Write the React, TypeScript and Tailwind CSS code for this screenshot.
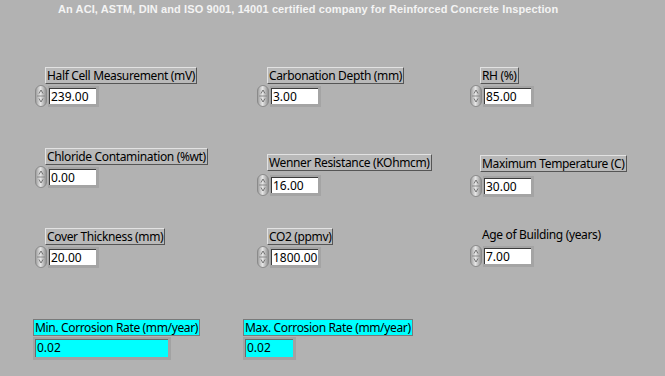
const font = { fontFamily: '"Noto Sans", "DejaVu Sans", sans-serif' };

const Spinner = () => (
  <svg width="12" height="22" viewBox="0 0 12 22" className="shrink-0">
    <defs>
      <linearGradient id="spin" x1="0" y1="0" x2="1" y2="0">
        <stop offset="0" stopColor="#9a9a9a" />
        <stop offset="0.45" stopColor="#e6e6e6" />
        <stop offset="1" stopColor="#8c8c8c" />
      </linearGradient>
    </defs>
    <rect x="0.5" y="0.5" width="11" height="21" rx="5.5" fill="url(#spin)" stroke="#8a8a8a" />
    <line x1="2" y1="11" x2="10" y2="11" stroke="#8a8a8a" />
    <path d="M4 8.5 L6 5 L8 8.5" fill="none" stroke="#6a6a6a" strokeWidth="0.9" />
    <path d="M4 13.5 L6 17 L8 13.5" fill="none" stroke="#6a6a6a" strokeWidth="0.9" />
  </svg>
);

const Label = ({ text, framed = true }: { text: string; framed?: boolean }) => (
  <div
    className={
      framed
        ? "h-[17px] w-fit px-[1px] bg-[#b9b9b9] border border-t-[#e2e2e2] border-l-[#e2e2e2] border-b-[#555555] border-r-[#555555] text-[12px] leading-[15px] tracking-[-0.35px] text-black whitespace-nowrap"
        : "h-[17px] w-fit px-[2px] text-[12px] leading-[15px] tracking-[-0.35px] text-black whitespace-nowrap"
    }
    style={font}
  >
    {text}
  </div>
);

const Numeric = ({ label, value, framed = true, gap = 1 }: { label: string; value: string; framed?: boolean; gap?: number }) => (
  <div className="flex flex-col">
    <div className="ml-[10px]">
      <Label text={label} framed={framed} />
    </div>
    <div className={gap === 1 ? "flex items-center gap-[1px] mt-[1px]" : "flex items-center gap-[1px] mt-[3px]"}>
      <Spinner />
      <div className="h-[21px] w-[51px] bg-[#a4a4a4] pt-[2px] pl-[1px] pr-[3px] pb-[3px]">
        <div
          className="h-full bg-white border-l border-t border-[#3c3c3c] pl-[1px] text-[12px] leading-[15px] text-black"
          style={font}
        >
          {value}
        </div>
      </div>
    </div>
  </div>
);

const Indicator = ({ label, value, width }: { label: string; value: string; width: string }) => (
  <div className="flex flex-col">
    <div
      className="h-[17px] w-fit px-[1px] bg-[#00ffff] border border-[#7a7a7a] text-[12px] leading-[15px] tracking-[-0.35px] text-black whitespace-nowrap"
      style={font}
    >
      {label}
    </div>
    <div className={`${width} h-[23px] mt-[1px] bg-[#a2a2a2] pt-[2px] pl-[2px] pr-[3px] pb-[3px]`}>
      <div
        className="h-full bg-[#00ffff] border-l border-t border-[#6a6a6a] pl-[1px] text-[12px] leading-[16px] text-black"
        style={font}
      >
        {value}
      </div>
    </div>
  </div>
);

export default function App() {
  return (
    <div className="w-[665px] h-[376px] bg-[#b2b2b2] overflow-hidden">
      <div
        className="pl-[58px] pt-[2px] text-[11px] leading-[14px] font-bold tracking-[0.1px] text-[#f4f4f4] whitespace-nowrap"
        style={{ fontFamily: '"Liberation Sans", Arial, sans-serif' }}
      >
        An ACI, ASTM, DIN and ISO 9001, 14001 certified company for Reinforced Concrete Inspection
      </div>

      <div className="flex pl-[35px] mt-[51px]">
        <div className="w-[222px]">
          <Numeric label="Half Cell Measurement (mV)" value="239.00" />
        </div>
        <div className="w-[213px]">
          <Numeric label="Carbonation Depth (mm)" value="3.00" />
        </div>
        <Numeric label="RH (%)" value="85.00" />
      </div>

      <div className="flex pl-[35px] mt-[41px]">
        <div className="w-[222px]">
          <Numeric label="Chloride Contamination (%wt)" value="0.00" />
        </div>
        <div className="w-[213px] pt-[6px]">
          <Numeric label="Wenner Resistance (KOhmcm)" value="16.00" gap={3} />
        </div>
        <div className="pt-[7px]">
          <Numeric label="Maximum Temperature (C)" value="30.00" gap={3} />
        </div>
      </div>

      <div className="flex pl-[35px] mt-[31px]">
        <div className="w-[222px]">
          <Numeric label="Cover Thickness (mm)" value="20.00" />
        </div>
        <div className="w-[213px]">
          <Numeric label="CO2 (ppmv)" value="1800.00" />
        </div>
        <div className="-mt-[1px]">
          <Numeric label="Age of Building (years)" value="7.00" framed={false} />
        </div>
      </div>

      <div className="flex pl-[33px] mt-[51px]">
        <div className="w-[210px]">
          <Indicator label="Min. Corrosion Rate (mm/year)" value="0.02" width="w-[138px]" />
        </div>
        <Indicator label="Max. Corrosion Rate (mm/year)" value="0.02" width="w-[53px]" />
      </div>
    </div>
  );
}
